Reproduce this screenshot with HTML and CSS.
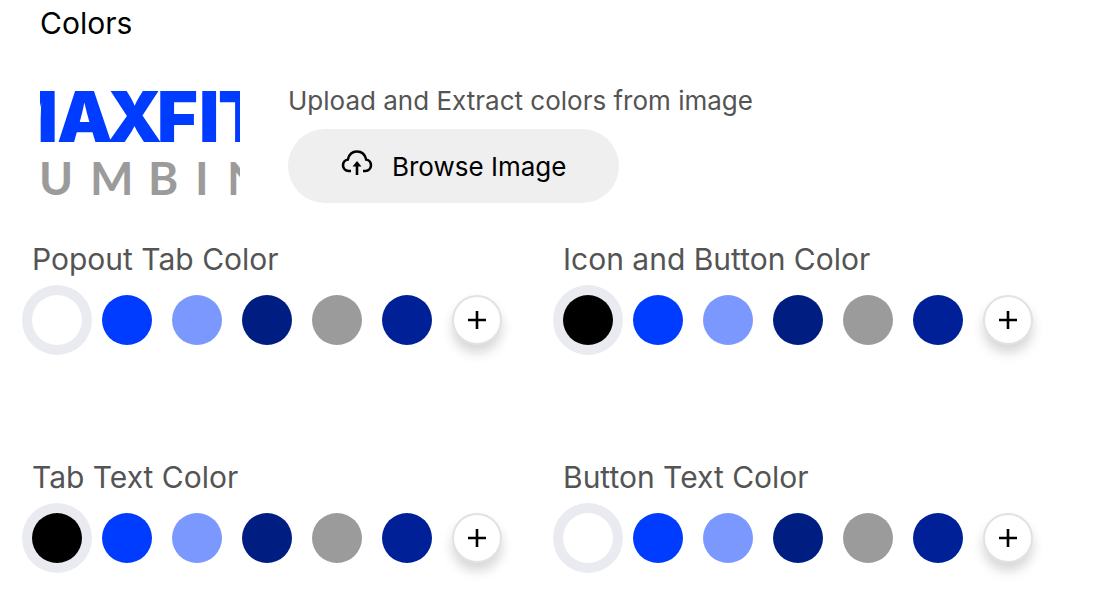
FILE: index.html
```html
<!DOCTYPE html>
<html lang="en">
<head>
<meta charset="utf-8">
<meta name="viewport" content="width=device-width, initial-scale=1">
<title>Colors</title>
<link rel="stylesheet" href="styles.css">
</head>
<body>
<main class="panel">
  <h1 class="title">Colors</h1>
  <section class="source">
    <svg class="logo" viewBox="0 0 200 112" role="img" aria-label="Maxfit Plumbing logo">
      <text class="logo-name" x="-49 17 67 117 159 178" y="58">MAXFIT</text>
      <text class="logo-sub" x="-1 50 108 155 187" y="111">UMBIN</text>
    </svg>
    <div class="upload">
      <p class="upload-label">Upload and Extract colors from image</p>
      <button class="browse" type="button">
        <svg class="cloud" viewBox="0 0 32 26" aria-hidden="true">
          <path d="M10 21H7.500A5.800 5.800 0 0 1 6.800 9.500C8 4.500 11.500 1.500 16 1.500S24 4.500 25.200 9.500A5.800 5.800 0 0 1 24.500 21H22M16 25V14"/>
          <path class="cloud-head" d="M11.500 16.500 16 11 20.500 16.500Z"/>
        </svg>
        <span>Browse Image</span>
      </button>
    </div>
  </section>
  <div class="groups">
    <fieldset class="group">
      <legend class="group-label">Popout Tab Color</legend>
      <div class="swatches">
        <input class="swatch white" type="radio" name="popout" aria-label="White" checked>
        <input class="swatch blue" type="radio" name="popout" aria-label="Blue">
        <input class="swatch light" type="radio" name="popout" aria-label="Light blue">
        <input class="swatch navy" type="radio" name="popout" aria-label="Navy">
        <input class="swatch gray" type="radio" name="popout" aria-label="Gray">
        <input class="swatch deep" type="radio" name="popout" aria-label="Deep blue">
        <button class="add" type="button" aria-label="Add color"><svg class="plus" viewBox="0 0 18 18" aria-hidden="true"><path d="M9 0V18M0 9H18"/></svg></button>
      </div>
    </fieldset>
    <fieldset class="group">
      <legend class="group-label">Icon and Button Color</legend>
      <div class="swatches">
        <input class="swatch black" type="radio" name="icon" aria-label="Black" checked>
        <input class="swatch blue" type="radio" name="icon" aria-label="Blue">
        <input class="swatch light" type="radio" name="icon" aria-label="Light blue">
        <input class="swatch navy" type="radio" name="icon" aria-label="Navy">
        <input class="swatch gray" type="radio" name="icon" aria-label="Gray">
        <input class="swatch deep" type="radio" name="icon" aria-label="Deep blue">
        <button class="add" type="button" aria-label="Add color"><svg class="plus" viewBox="0 0 18 18" aria-hidden="true"><path d="M9 0V18M0 9H18"/></svg></button>
      </div>
    </fieldset>
    <fieldset class="group">
      <legend class="group-label">Tab Text Color</legend>
      <div class="swatches">
        <input class="swatch black" type="radio" name="tabtext" aria-label="Black" checked>
        <input class="swatch blue" type="radio" name="tabtext" aria-label="Blue">
        <input class="swatch light" type="radio" name="tabtext" aria-label="Light blue">
        <input class="swatch navy" type="radio" name="tabtext" aria-label="Navy">
        <input class="swatch gray" type="radio" name="tabtext" aria-label="Gray">
        <input class="swatch deep" type="radio" name="tabtext" aria-label="Deep blue">
        <button class="add" type="button" aria-label="Add color"><svg class="plus" viewBox="0 0 18 18" aria-hidden="true"><path d="M9 0V18M0 9H18"/></svg></button>
      </div>
    </fieldset>
    <fieldset class="group">
      <legend class="group-label">Button Text Color</legend>
      <div class="swatches">
        <input class="swatch white" type="radio" name="btntext" aria-label="White" checked>
        <input class="swatch blue" type="radio" name="btntext" aria-label="Blue">
        <input class="swatch light" type="radio" name="btntext" aria-label="Light blue">
        <input class="swatch navy" type="radio" name="btntext" aria-label="Navy">
        <input class="swatch gray" type="radio" name="btntext" aria-label="Gray">
        <input class="swatch deep" type="radio" name="btntext" aria-label="Deep blue">
        <button class="add" type="button" aria-label="Add color"><svg class="plus" viewBox="0 0 18 18" aria-hidden="true"><path d="M9 0V18M0 9H18"/></svg></button>
      </div>
    </fieldset>
  </div>
</main>
</body>
</html>
```
FILE: styles.css
```css
* { box-sizing: border-box; }
body {
  margin: 0;
  background: #fff;
  color: #000;
  font-family: Inter, "Liberation Sans", sans-serif;
  font-weight: 425;
}
.panel { padding: 3px 0 29px 32px; }
.title {
  margin: 0 0 41px;
  padding-left: 8px;
  font-size: 30px;
  line-height: 40px;
  font-weight: 425;
}
.source {
  display: flex;
  align-items: flex-start;
  gap: 48px;
  padding-left: 8px;
}
.logo {
  width: 200px;
  height: 112px;
  overflow: hidden;
}
.logo-name {
  font-size: 70px;
  font-weight: 900;
  fill: #003cff;
}
.logo-sub {
  font-family: Lato, "Liberation Sans", sans-serif;
  font-size: 46px;
  font-weight: 700;
  fill: #9b9b9b;
}
.upload-label {
  margin: 0 0 12px;
  font-size: 26px;
  line-height: 33px;
  color: #545454;
}
.browse {
  display: flex;
  align-items: center;
  gap: 19px;
  height: 74px;
  padding: 0 53px;
  border: 0;
  border-radius: 37px;
  background: #efefef;
  color: #000;
  font: inherit;
  font-size: 26px;
}
.cloud {
  width: 32px;
  height: 26px;
  margin-bottom: 6px;
  fill: none;
  stroke: #000;
  stroke-width: 2.6;
}
.cloud-head { fill: #000; stroke: none; }
.groups {
  display: grid;
  grid-template-columns: 1fr 1fr;
  row-gap: 112px;
  margin-top: 36px;
}
.group {
  min-width: 0;
  margin: 0;
  padding: 0;
  border: 0;
}
.group-label {
  padding: 0;
  font-size: 30px;
  line-height: 40px;
  color: #545454;
}
.swatches {
  display: flex;
  gap: 20px;
  padding-top: 16px;
}
.swatch {
  appearance: none;
  width: 50px;
  height: 50px;
  margin: 0;
  border-radius: 50%;
}
.swatch:checked { box-shadow: 0 0 0 10px #eaebf0; }
.white { background: #fff; }
.black { background: #000; }
.blue { background: #003cff; }
.light { background: #7b98ff; }
.navy { background: #001d82; }
.gray { background: #9b9b9b; }
.deep { background: #002098; }
.add {
  display: grid;
  place-items: center;
  width: 50px;
  height: 50px;
  padding: 0;
  border: 2px solid #e2e2e2;
  border-radius: 50%;
  background: #fff;
  box-shadow: 0 8px 12px rgba(0, 0, 0, 0.16);
}
.plus {
  width: 18px;
  height: 18px;
  stroke: #000;
  stroke-width: 2.6;
}
```
